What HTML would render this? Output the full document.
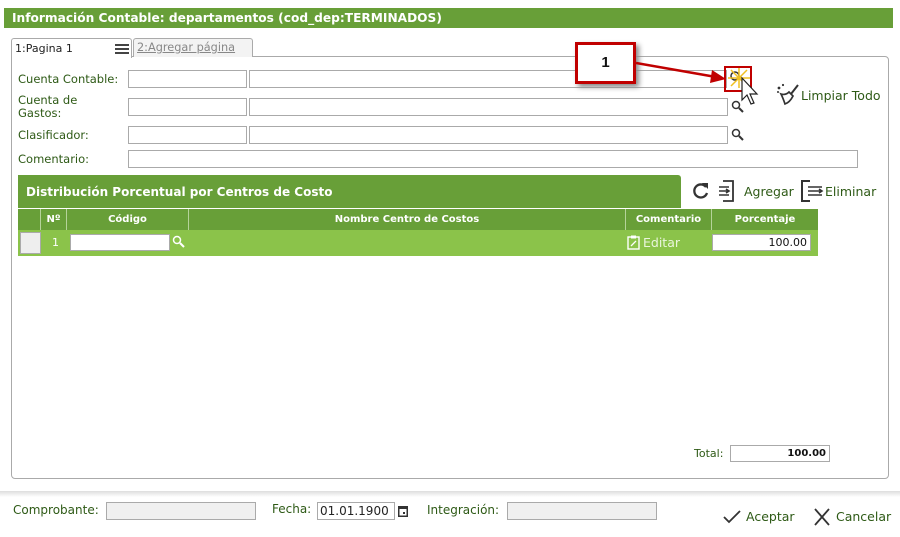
<!DOCTYPE html>
<html><head><meta charset="utf-8"><style>
*{box-sizing:border-box;margin:0;padding:0}
body{width:900px;height:537px;background:#fff;font-family:"DejaVu Sans","Liberation Sans",sans-serif;font-size:11px;position:relative;overflow:hidden;color:#333}
.a{position:absolute}
.inp{position:absolute;border:1px solid #aaa;background:#fff;height:18px}
.lbl{position:absolute;color:#2e5a16;font-size:11.5px}
.th{position:absolute;top:209px;height:21px;background:#689f38;color:#fff;font-weight:bold;font-size:10px;text-align:center;line-height:21px;border-left:1px solid #b5d39a}
</style></head><body>
<div class="a" style="left:4px;top:8px;width:889px;height:20px;background:#689f38;color:#fff;font-weight:bold;font-size:12.2px;line-height:20px;padding-left:8px">Información Contable: departamentos (cod_dep:TERMINADOS)</div>
<div class="a" style="left:11px;top:56px;width:878px;height:423px;border:1px solid #aaa;border-radius:0 4px 4px 4px"></div>
<div class="a" style="left:11px;top:38px;width:121px;height:20px;border:1px solid #aaa;border-bottom:none;border-radius:3px 3px 0 0;background:#fff;font-size:11px;line-height:19px;padding-left:3px;color:#222">1:Pagina 1
<svg class="a" style="left:103px;top:5px" width="14" height="10"><path d="M0 1H14M0 5H14M0 9H14" stroke="#444" stroke-width="2"/></svg></div>
<div class="a" style="left:133px;top:38px;width:120px;height:19px;border:1px solid #aaa;border-bottom:none;border-radius:3px 3px 0 0;background:#f3f3f3;font-size:11.3px;line-height:18px;padding-left:3px;color:#888;text-decoration:underline">2:Agregar página</div>

<div class="lbl" style="left:18px;top:72px">Cuenta Contable:</div>
<div class="lbl" style="left:18px;top:94px;line-height:13px">Cuenta de<br>Gastos:</div>
<div class="lbl" style="left:18px;top:128px">Clasificador:</div>
<div class="lbl" style="left:18px;top:152px">Comentario:</div>
<div class="inp" style="left:128px;top:70px;width:119px"></div>
<div class="inp" style="left:249px;top:70px;width:478px"></div>
<div class="inp" style="left:128px;top:98px;width:119px"></div>
<div class="inp" style="left:249px;top:98px;width:479px"></div>
<div class="inp" style="left:128px;top:126px;width:119px"></div>
<div class="inp" style="left:249px;top:126px;width:479px"></div>
<div class="inp" style="left:128px;top:150px;width:730px"></div>
<svg class="a" style="left:731px;top:100px" width="14" height="14"><circle cx="5" cy="5" r="3.5" fill="none" stroke="#333" stroke-width="1.5"/><path d="M8 8L12 12" stroke="#333" stroke-width="2"/></svg>
<svg class="a" style="left:731px;top:128px" width="14" height="14"><circle cx="5" cy="5" r="3.5" fill="none" stroke="#333" stroke-width="1.5"/><path d="M8 8L12 12" stroke="#333" stroke-width="2"/></svg>
<div class="a" style="left:575px;top:42px;width:61px;height:42px;border:3px solid #c00000;background:#fff;font-family:'Liberation Sans',sans-serif;font-weight:bold;font-size:15px;text-align:center;line-height:36px;color:#111;box-shadow:3px 3px 5px #888">1</div>
<svg class="a" style="left:636px;top:55px" width="100" height="30"><path d="M0 8L80 22" stroke="#c00000" stroke-width="2.5"/><path d="M76 15L90 24L74 28Z" fill="#c00000"/></svg>
<div class="a" style="left:724px;top:66px;width:28px;height:26px;border:2px solid #c00000"></div>
<svg class="a" style="left:726px;top:66px" width="38" height="42"><circle cx="9" cy="10" r="4" fill="none" stroke="#333" stroke-width="1.5"/><path d="M2 12L24 12M13 2L13 22M5 4L21 20M21 4L5 20" stroke="#f0c020" stroke-width="1.5"/><path d="M16 12L16 34L21 29L25 38L28 37L24 28L31 28Z" fill="#fff" stroke="#222" stroke-width="1.2"/></svg>
<svg class="a" style="left:776px;top:83px" width="24" height="24"><circle cx="3" cy="5" r="1.4" fill="#333"/><circle cx="7" cy="2" r="1.1" fill="#333"/><circle cx="2" cy="9" r="1" fill="#333"/><path d="M5 11C8 12 11 11 13 9L17 13C15 17 12 20 9 21C8 18 7 15 5 11Z" fill="none" stroke="#333" stroke-width="1.7"/><path d="M15 11L22 2" stroke="#333" stroke-width="2"/></svg>
<div class="a" style="left:801px;top:88px;font-size:12.5px;color:#2e5a16">Limpiar Todo</div>
<div class="a" style="left:18px;top:175px;width:663px;height:33px;background:#689f38;border-radius:0 3px 0 0;color:#fff;font-weight:bold;font-size:12px;line-height:35px;padding-left:8px">Distribución Porcentual por Centros de Costo</div>
<svg class="a" style="left:692px;top:182px" width="18" height="18"><path d="M14 5A6.5 6.5 0 1 0 15 11" fill="none" stroke="#333" stroke-width="2.3"/><path d="M10 1L16 1L16 7Z" fill="#333"/></svg>
<svg class="a" style="left:719px;top:180px" width="20" height="22"><path d="M4 1H14V21H4" fill="none" stroke="#333" stroke-width="1.8"/><path d="M0 7H10M0 11H10M0 15H10M7 9L10 11L7 13" stroke="#333" stroke-width="1.6" fill="none"/></svg>
<div class="a" style="left:744px;top:184px;font-size:12.5px;color:#2e5a16">Agregar</div>
<svg class="a" style="left:800px;top:180px" width="24" height="22"><path d="M10 1H2V21H10" fill="none" stroke="#333" stroke-width="2"/><path d="M8 7H22M8 11H22M8 15H22M19 9L22 11L19 13" stroke="#333" stroke-width="1.6" fill="none"/></svg>
<div class="a" style="left:825px;top:184px;font-size:12.5px;color:#2e5a16">Eliminar</div>
<div class="th" style="left:18px;width:22px;border-left:none"></div>
<div class="th" style="left:40px;width:26px">Nº</div>
<div class="th" style="left:66px;width:122px">Código</div>
<div class="th" style="left:188px;width:437px">Nombre Centro de Costos</div>
<div class="th" style="left:625px;width:86px">Comentario</div>
<div class="th" style="left:711px;width:107px">Porcentaje</div>
<div class="a" style="left:18px;top:230px;width:800px;height:26px;background:#8bc34a"></div>
<div class="a" style="left:20px;top:232px;width:21px;height:22px;background:#eee;border:1px solid #aaa"></div>
<div class="a" style="left:52px;top:236px;color:#fff;font-size:11px">1</div>
<div class="inp" style="left:70px;top:234px;width:100px;height:17px"></div>
<svg class="a" style="left:172px;top:235px" width="14" height="14"><circle cx="5" cy="5" r="3.5" fill="none" stroke="#fff" stroke-width="1.5"/><path d="M8 8L12 12" stroke="#fff" stroke-width="2"/></svg>
<svg class="a" style="left:627px;top:235px" width="13" height="15"><rect x="1" y="2" width="11" height="12" fill="none" stroke="#fff" stroke-width="1.4"/><rect x="4" y="0.5" width="5" height="3" fill="#fff"/><path d="M4 11L9 6" stroke="#fff" stroke-width="1.3"/></svg>
<div class="a" style="left:643px;top:235px;color:#eaf5dd;font-size:12.5px">Editar</div>
<div class="inp" style="left:712px;top:234px;width:99px;height:17px;text-align:right;padding-right:3px;font-size:11px;line-height:15px;color:#111">100.00</div>
<div class="a" style="left:694px;top:447px;color:#2e5a16;font-size:11px">Total:</div>
<div class="inp" style="left:730px;top:445px;width:100px;height:17px;text-align:right;padding-right:3px;font-weight:bold;font-size:10px;line-height:15px;color:#111">100.00</div>
<div class="a" style="left:0;top:491px;width:900px;height:6px;background:linear-gradient(#ddd,#fff)"></div>
<div class="lbl" style="left:13px;top:503px;font-size:12px">Comprobante:</div>
<div class="inp" style="left:106px;top:502px;width:150px;background:#f0f0f0"></div>
<div class="lbl" style="left:272px;top:502px;font-size:12px">Fecha:</div>
<div class="inp" style="left:317px;top:502px;width:78px;font-size:12px;line-height:16px;padding-left:2px;color:#222">01.01.1900</div>
<svg class="a" style="left:397px;top:504px" width="12" height="14"><rect x="1" y="2" width="10" height="11" fill="#333"/><rect x="2.5" y="5" width="7" height="6.5" fill="#fff"/><rect x="6" y="8" width="2" height="2" fill="#333"/></svg>
<div class="lbl" style="left:427px;top:503px;font-size:12px">Integración:</div>
<div class="inp" style="left:507px;top:502px;width:150px;background:#f0f0f0"></div>
<svg class="a" style="left:723px;top:510px" width="18" height="14"><path d="M1 7L6 12L17 1" fill="none" stroke="#333" stroke-width="1.8"/></svg>
<div class="a" style="left:746px;top:509px;font-size:12.5px;color:#2e5a16">Aceptar</div>
<svg class="a" style="left:813px;top:508px" width="18" height="18"><path d="M2 1L16 17M16 1L2 17" stroke="#333" stroke-width="1.8"/></svg>
<div class="a" style="left:836px;top:509px;font-size:12.5px;color:#2e5a16">Cancelar</div>
</body></html>
